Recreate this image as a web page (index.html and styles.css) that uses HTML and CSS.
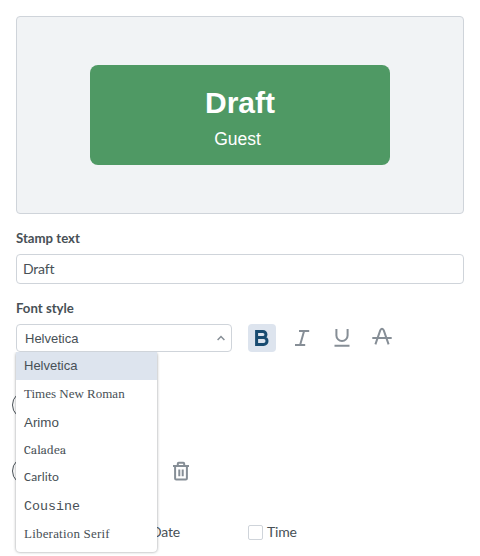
FILE: index.html
```html
<!DOCTYPE html>
<html lang="en">
<head>
<meta charset="utf-8">
<title>Stamp</title>
<link rel="stylesheet" href="styles.css">
</head>
<body>
<main class="panel">
  <div class="preview">
    <div class="stamp">
      <div class="stamp-title">Draft</div>
      <div class="stamp-sub">Guest</div>
    </div>
  </div>
  <label class="label" for="stamp-text">Stamp text</label>
  <input class="text-input" id="stamp-text" type="text" value="Draft">
  <div class="label">Font style</div>
  <div class="font-row">
    <div class="select">
      <span class="value">Helvetica</span>
      <svg class="chevron" width="8" height="6" viewBox="0 0 8 6"><path d="M.6 5 4 1.5 7.4 5"/></svg>
      <div class="menu">
        <div class="option selected">Helvetica</div>
        <div class="option times">Times New Roman</div>
        <div class="option arimo">Arimo</div>
        <div class="option caladea">Caladea</div>
        <div class="option carlito">Carlito</div>
        <div class="option cousine">Cousine</div>
        <div class="option serif">Liberation Serif</div>
      </div>
    </div>
    <button class="tool active" aria-label="Bold"><svg width="28" height="28" viewBox="0 0 28 28"><path class="bold" d="M8.6 7.5h6.3a3 3 0 0 1 0 6.1H8.6zM8.6 13.6h7a3.4 3.4 0 0 1 0 6.8h-7z"/></svg></button>
    <button class="tool" aria-label="Italic"><svg width="28" height="28" viewBox="0 0 28 28"><path d="M11 6.9h10.2M7 21.1h10.2M16.1 7l-4 14"/></svg></button>
    <button class="tool" aria-label="Underline"><svg width="28" height="28" viewBox="0 0 28 28"><path d="M8.4 5v6.4a5.6 5.6 0 0 0 11.2 0V5M6.5 21.8h15"/></svg></button>
    <button class="tool" aria-label="Strikeout"><svg width="28" height="28" viewBox="0 0 28 28"><path d="M7.4 20.4l4.9-14.2q1.7-2.8 3.4 0L20.6 20.4M4.3 14.1h19.4"/></svg></button>
  </div>
  <div class="swatches first"><span class="swatch"></span></div>
  <div class="swatches second">
    <span class="swatch"></span>
    <svg class="trash" width="20" height="20" viewBox="0 0 20 20"><path d="M2 5.1h16M6.8 4.8V2.7q0-.9.9-.9h4.6q.9 0 .9.9v2.1M4.1 5.5v12q0 1.1 1.1 1.1h9.6q1.1 0 1.1-1.1v-12M8.3 8.5v6.8M11.7 8.5v6.8"/></svg>
  </div>
  <div class="checks">
    <label class="check"><span class="box"></span></label>
    <label class="check"><span class="box"></span>Date</label>
    <label class="check"><span class="box"></span>Time</label>
  </div>
</main>
</body>
</html>
```
FILE: styles.css
```css
* { box-sizing: border-box; }
body {
  margin: 0;
  height: 556px;
  overflow: hidden;
  background: #fff;
  color: #485056;
  font: 13px/16px Lato, sans-serif;
}
.panel { padding: 16px; }
.preview {
  display: flex;
  align-items: center;
  justify-content: center;
  height: 198px;
  margin-bottom: 16px;
  border: 1px solid #cfd4da;
  border-radius: 4px;
  background: #f1f3f5;
}
.stamp {
  width: 300px;
  height: 100px;
  padding-top: 20px;
  border-radius: 8px;
  background: #4f9964;
  color: #fff;
  font-family: "Liberation Sans", sans-serif;
  text-align: center;
}
.stamp-title { font-size: 30px; font-weight: 700; line-height: 36px; }
.stamp-sub { margin-top: 7px; padding-right: 5px; font-size: 17.5px; line-height: 22px; }
.label {
  display: block;
  margin-bottom: 8px;
  font-size: 13.2px;
  font-weight: 700;
  line-height: 16px;
}
.text-input {
  display: block;
  width: 100%;
  height: 30px;
  margin-bottom: 16px;
  padding: 0 6px 2px;
  border: 1px solid #cfd4da;
  border-radius: 4px;
  color: inherit;
  font: 14px Lato, sans-serif;
  letter-spacing: -.2px;
}
.font-row { display: flex; height: 28px; }
.select {
  position: relative;
  display: flex;
  align-items: center;
  justify-content: space-between;
  width: 216px;
  height: 28px;
  margin-right: 16px;
  padding: 0 6px 0 8px;
  border: 1px solid #cfd4da;
  border-radius: 4px;
  font-family: "Liberation Sans", sans-serif;
}
.value { padding-top: 2px; }
svg { display: block; fill: none; stroke: #868e96; stroke-width: 2; }
.chevron { stroke-width: 1.5; }
.menu {
  position: absolute;
  z-index: 1;
  top: 27px;
  left: -1px;
  width: 141px;
  padding-bottom: 4px;
  border-radius: 4px;
  background: #fff;
  box-shadow: 0 0 3px rgba(52, 58, 64, .55);
  clip-path: inset(0 -4px -4px -4px);
}
.option { height: 28px; padding-left: 8px; line-height: 28px; white-space: nowrap; }
.selected { background: #dde4ee; }
.times, .serif { font-family: "Liberation Serif", serif; }
.serif { letter-spacing: .2px; }
.arimo { padding-top: 1px; font-family: Arimo, "Liberation Sans", sans-serif; font-size: 13.33px; }
.caladea { font-family: Caladea, Cambria, serif; letter-spacing: .15px; }
.carlito { font-family: Carlito, Calibri, Lato, sans-serif; line-height: 26px; }
.cousine { padding-top: 1px; font-family: Cousine, "Liberation Mono", monospace; font-size: 13.33px; }
.tool {
  width: 28px;
  height: 28px;
  margin-right: 12px;
  padding: 0;
  border: 0;
  border-radius: 4px;
  background: none;
}
.active { background: #dde4ee; }
.bold { stroke: #184b70; stroke-width: 3; }
.swatches { display: flex; align-items: center; height: 28px; margin-left: -4px; }
.first { margin-top: 39px; }
.second { margin-top: 38px; }
.swatch { width: 28px; height: 28px; border: 1px solid #485056; border-radius: 50%; }
.trash { margin-left: 131px; }
.checks {
  display: grid;
  grid-template-columns: 116px 116px 116px;
  margin-top: 39px;
  font-size: 14px;
  letter-spacing: -.2px;
}
.check { display: flex; align-items: center; gap: 4px; }
.box { width: 15px; height: 15px; border: 1px solid #cfd4da; border-radius: 2px; }
```
